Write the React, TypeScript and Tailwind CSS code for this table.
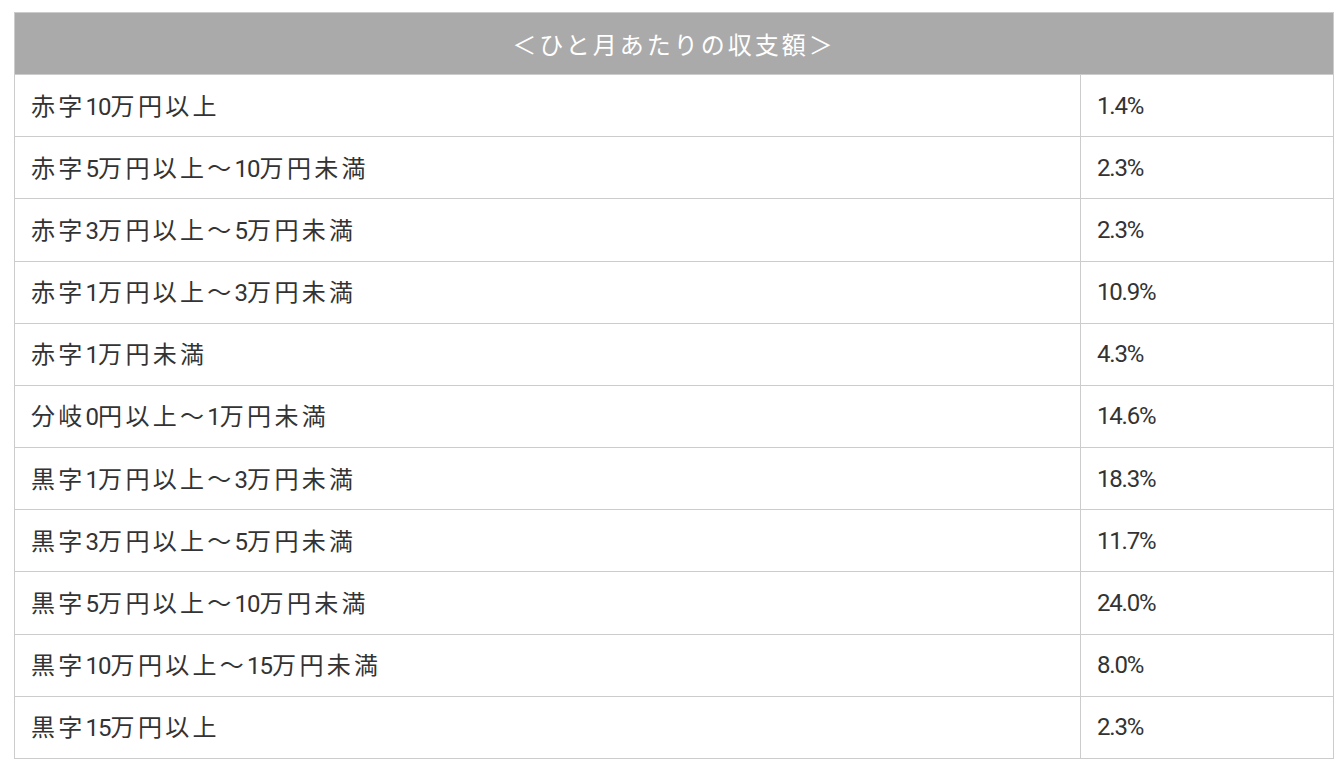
import React from "react";

const rows: [string, string][] = [
  ["赤字10万円以上", "1.4%"],
  ["赤字5万円以上～10万円未満", "2.3%"],
  ["赤字3万円以上～5万円未満", "2.3%"],
  ["赤字1万円以上～3万円未満", "10.9%"],
  ["赤字1万円未満", "4.3%"],
  ["分岐0円以上～1万円未満", "14.6%"],
  ["黒字1万円以上～3万円未満", "18.3%"],
  ["黒字3万円以上～5万円未満", "11.7%"],
  ["黒字5万円以上～10万円未満", "24.0%"],
  ["黒字10万円以上～15万円未満", "8.0%"],
  ["黒字15万円以上", "2.3%"],
];

const narrow = { fontFamily: '"Roboto", "Liberation Sans", sans-serif' };

function Label({ text }: { text: string }) {
  const parts = text.split(/(\d+)/).filter((p) => p.length > 0);
  return (
    <span className="whitespace-nowrap">
      {parts.map((p, i) =>
        /^\d+$/.test(p) ? (
          <span key={i} className="tracking-[-1px]" style={narrow}>
            {p}
          </span>
        ) : (
          <span key={i} className="tracking-[3.3px]">
            {p}
          </span>
        )
      )}
    </span>
  );
}

export default function App() {
  return (
    <div
      className="min-h-[764px] bg-white pt-[12px] pl-[14px] text-[#333333]"
      style={{ fontFamily: '"Noto Sans CJK JP", "Noto Sans", sans-serif' }}
    >
      <div className="w-[1320px] border-t border-l border-[#cccccc]">
        <div className="flex h-[62px] items-center justify-center border-r border-b border-[#cccccc] bg-[#aaaaaa] text-[24px] tracking-[3px] text-white">
          ＜ひと月あたりの収支額＞
        </div>
        {rows.map(([label, value], i) => (
          <div key={i} className="grid grid-cols-[1066px_253px]">
            <div className="flex h-[62.18px] items-center border-r border-b border-[#cccccc] pl-[16px] text-[24px]">
              <Label text={label} />
            </div>
            <div
              className="flex h-[62.18px] items-center border-r border-b border-[#cccccc] pl-[16px] text-[24px] tracking-[-1.2px]"
              style={narrow}
            >
              {value}
            </div>
          </div>
        ))}
      </div>
    </div>
  );
}
